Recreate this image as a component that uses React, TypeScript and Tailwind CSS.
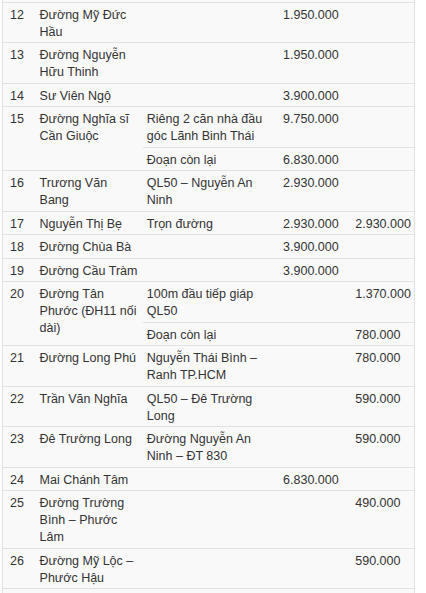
import React from "react";

type Part = { seg: string; p1: string; p2: string };
type Row = { no: string; name: string; parts: Part[] };

const rows: Row[] = [
  { no: "12", name: "Đường Mỹ Đức Hầu", parts: [{ seg: "", p1: "1.950.000", p2: "" }] },
  { no: "13", name: "Đường Nguyễn Hữu Thinh", parts: [{ seg: "", p1: "1.950.000", p2: "" }] },
  { no: "14", name: "Sư Viên Ngộ", parts: [{ seg: "", p1: "3.900.000", p2: "" }] },
  {
    no: "15",
    name: "Đường Nghĩa sĩ Cần Giuộc",
    parts: [
      { seg: "Riêng 2 căn nhà đầu góc Lãnh Binh Thái", p1: "9.750.000", p2: "" },
      { seg: "Đoạn còn lại", p1: "6.830.000", p2: "" },
    ],
  },
  { no: "16", name: "Trương Văn Bang", parts: [{ seg: "QL50 – Nguyễn An Ninh", p1: "2.930.000", p2: "" }] },
  { no: "17", name: "Nguyễn Thị Bẹ", parts: [{ seg: "Trọn đường", p1: "2.930.000", p2: "2.930.000" }] },
  { no: "18", name: "Đường Chùa Bà", parts: [{ seg: "", p1: "3.900.000", p2: "" }] },
  { no: "19", name: "Đường Cầu Tràm", parts: [{ seg: "", p1: "3.900.000", p2: "" }] },
  {
    no: "20",
    name: "Đường Tân Phước (ĐH11 nối dài)",
    parts: [
      { seg: "100m đầu tiếp giáp QL50", p1: "", p2: "1.370.000" },
      { seg: "Đoạn còn lại", p1: "", p2: "780.000" },
    ],
  },
  { no: "21", name: "Đường Long Phú", parts: [{ seg: "Nguyễn Thái Bình – Ranh TP.HCM", p1: "", p2: "780.000" }] },
  { no: "22", name: "Trần Văn Nghĩa", parts: [{ seg: "QL50 – Đê Trường Long", p1: "", p2: "590.000" }] },
  { no: "23", name: "Đê Trường Long", parts: [{ seg: "Đường Nguyễn An Ninh – ĐT 830", p1: "", p2: "590.000" }] },
  { no: "24", name: "Mai Chánh Tâm", parts: [{ seg: "", p1: "6.830.000", p2: "" }] },
  { no: "25", name: "Đường Trường Bình – Phước Lâm", parts: [{ seg: "", p1: "", p2: "490.000" }] },
  { no: "26", name: "Đường Mỹ Lộc – Phước Hậu", parts: [{ seg: "", p1: "", p2: "590.000" }] },
];

const cell = "border-b border-[#e2e2e2] px-[4px] pt-[4px] pb-[1.5px] align-top";

export default function App() {
  return (
    <div className="min-h-screen bg-white pl-[2px]">
      <table className="w-[413px] table-fixed border-collapse border-x border-[#e2e2e2] bg-[#f9f9f9] font-['Liberation_Sans',Arial,sans-serif] text-[12.5px] leading-[17px] text-[#333]">
        <colgroup>
          <col className="w-[33px]" />
          <col className="w-[107px]" />
          <col className="w-[136px]" />
          <col className="w-[72px]" />
          <col className="w-[63px]" />
        </colgroup>
        <tbody>
          {/* tail of the previous row */}
          <tr>
            <td colSpan={5} className="h-[2px] border-b border-[#e2e2e2] p-0" />
          </tr>
          {rows.map((r) =>
            r.parts.map((p, i) => (
              <tr key={r.no + "-" + i}>
                {i === 0 && (
                  <>
                    <td rowSpan={r.parts.length} className={`${cell} pl-[7px]`}>
                      {r.no}
                    </td>
                    <td rowSpan={r.parts.length} className={cell}>
                      {r.name}
                    </td>
                  </>
                )}
                <td className={cell}>{p.seg}</td>
                <td className={cell}>{p.p1}</td>
                <td className={`${cell} whitespace-nowrap`}>{p.p2}</td>
              </tr>
            ))
          )}
          <tr>
            <td colSpan={5} className="h-[24px] border-b border-[#e2e2e2] p-0" />
          </tr>
        </tbody>
      </table>
    </div>
  );
}
